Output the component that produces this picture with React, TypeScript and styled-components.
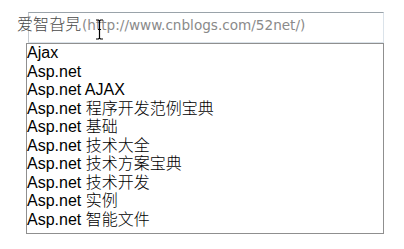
import React from "react";
import styled, { createGlobalStyle } from "styled-components";

const GlobalStyle = createGlobalStyle`
  html, body {
    margin: 0;
    padding: 0;
    background: #ffffff;
  }
`;

const Page = styled.div`
  width: 404px;
  height: 249px;
  padding: 12px 0 0 26px;
  box-sizing: border-box;
  overflow: hidden;
`;

const Field = styled.div`
  position: relative;
  width: 358px;
`;

const SearchBox = styled.div`
  margin-left: 2px;
  width: 356px;
  height: 31px;
  box-sizing: border-box;
  border: 1px solid #dbe3ea;
  border-top-color: #9aa3aa;
  border-left-color: #c4cad0;
  background: #fff;
`;

const Watermark = styled.div`
  position: absolute;
  left: -9px;
  top: 2px;
  white-space: nowrap;
  font-family: "DejaVu Sans", "Noto Sans CJK SC", sans-serif;
  font-size: 13.6px;
  line-height: 22px;
  pointer-events: none;
`;

const Name = styled.span`
  font-size: 16px;
  font-weight: 300;
  color: #4a4a4a;
  margin-right: 1px;
`;

const Url = styled.span`
  color: #8a8a8a;
`;

const Cursor = styled.svg`
  position: absolute;
  left: 69px;
  top: 7px;
`;

const List = styled.ul`
  list-style: none;
  margin: 0;
  padding: 0 0 4px 0;
  width: 358px;
  box-sizing: border-box;
  border: 1px solid #8f8f8f;
  background: #fff;
`;

const Item = styled.li`
  font-family: "Liberation Sans", Arial, "Noto Sans CJK SC", sans-serif;
  font-size: 16px;
  font-weight: 300;
  line-height: 18.5px;
  height: 18.5px;
  color: #000;
  white-space: nowrap;
`;

const items = [
  "Ajax",
  "Asp.net",
  "Asp.net AJAX",
  "Asp.net 程序开发范例宝典",
  "Asp.net 基础",
  "Asp.net 技术大全",
  "Asp.net 技术方案宝典",
  "Asp.net 技术开发",
  "Asp.net 实例",
  "Asp.net 智能文件",
];

export default function App() {
  return (
    <Page>
      <GlobalStyle />
      <Field>
        <SearchBox />
        <Watermark>
          <Name>爱智旮旯</Name>
          <Url>(http://www.cnblogs.com/52net/)</Url>
        </Watermark>
        <Cursor width="9" height="21" viewBox="0 0 9 21">
          <path
            d="M1 1h2.5l1 1 1-1H8M4.5 2v17M1 20h2.5l1-1 1 1H8M3 10.5h3"
            stroke="#000"
            strokeWidth="1.2"
            fill="none"
          />
        </Cursor>
        <List>
          {items.map((label, key) => (
            <Item key={key}>{label}</Item>
          ))}
        </List>
      </Field>
    </Page>
  );
}
